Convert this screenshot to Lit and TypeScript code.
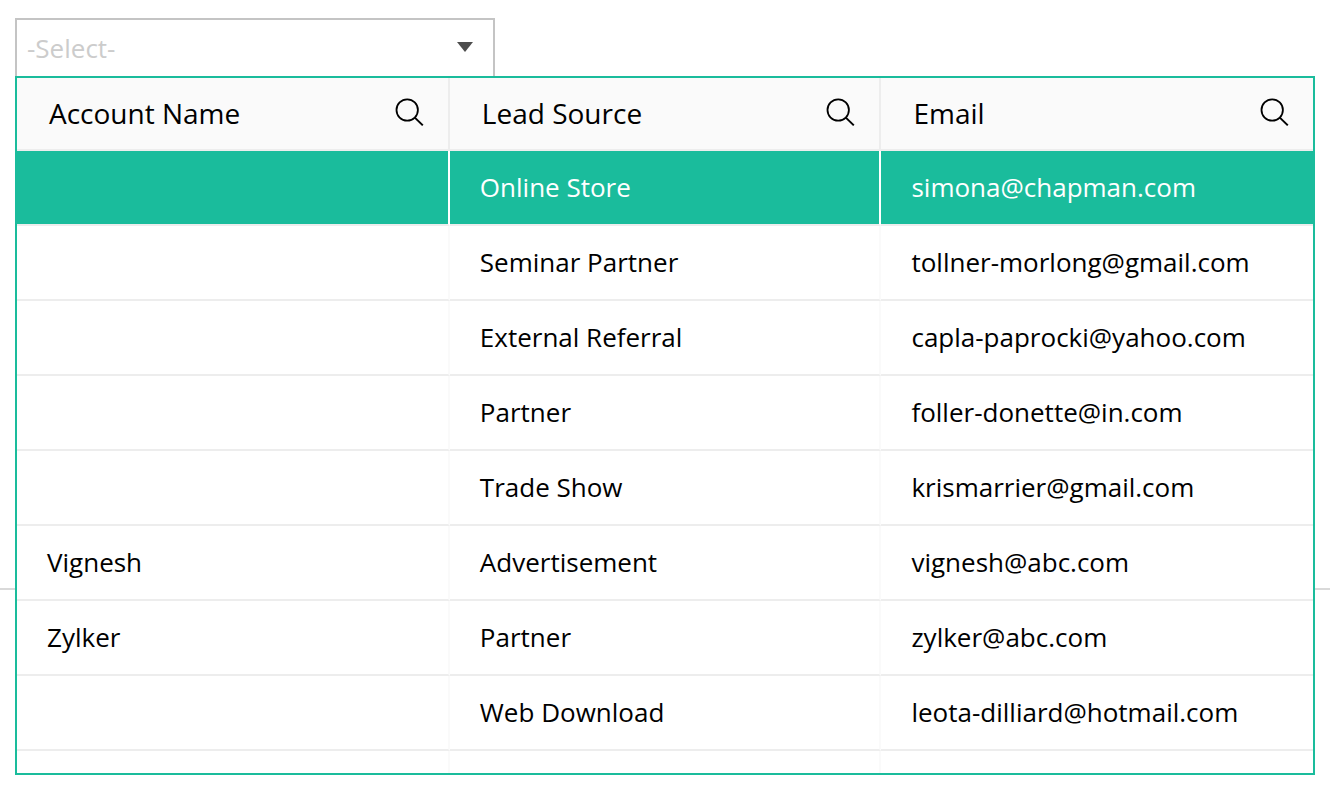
import { LitElement, html, css } from "lit";
import { customElement, state } from "lit/decorators.js";
import { classMap } from "lit/directives/class-map.js";

interface Lead {
  account: string;
  source: string;
  email: string;
}

const COLUMNS = ["Account Name", "Lead Source", "Email"];

const LEADS: Lead[] = [
  { account: "", source: "Online Store", email: "simona@chapman.com" },
  { account: "", source: "Seminar Partner", email: "tollner-morlong@gmail.com" },
  { account: "", source: "External Referral", email: "capla-paprocki@yahoo.com" },
  { account: "", source: "Partner", email: "foller-donette@in.com" },
  { account: "", source: "Trade Show", email: "krismarrier@gmail.com" },
  { account: "Vignesh", source: "Advertisement", email: "vignesh@abc.com" },
  { account: "Zylker", source: "Partner", email: "zylker@abc.com" },
  { account: "", source: "Web Download", email: "leota-dilliard@hotmail.com" },
  { account: "", source: "", email: "" },
];

@customElement("app-root")
export class AppRoot extends LitElement {
  static styles = css`
    :host {
      display: block;
      min-height: 100vh;
      background: #fff;
      color: #000;
      font-family: "Open Sans", "Noto Sans", sans-serif;
      font-size: 26px;
      line-height: 36px;
    }
    * {
      box-sizing: border-box;
    }
    .section {
      min-height: 590px;
      padding: 18px 15px 0;
      border-bottom: 2px solid #d9d9d9;
    }
    .lookup {
      position: relative;
    }
    .field {
      display: grid;
      align-items: center;
      max-width: 480px;
    }
    .picker,
    .arrow {
      grid-area: 1 / 1;
    }
    .picker {
      appearance: none;
      width: 100%;
      height: 60px;
      padding: 0 10px;
      border: 2px solid #c4c4c4;
      border-radius: 0;
      background: #fff;
      color: #ccc;
      font: inherit;
      outline: none;
    }
    .arrow {
      justify-self: end;
      width: 16px;
      height: 10px;
      margin: 0 22px 2px 0;
      pointer-events: none;
    }
    .panel {
      position: absolute;
      top: 58px;
      left: 0;
      right: 0;
      height: calc(100vh - 95px);
      overflow: auto;
      scrollbar-width: none;
      border: 2px solid #1abc9c;
      background: #fff;
    }
    .grid {
      width: 100%;
      table-layout: fixed;
      border-collapse: separate;
      border-spacing: 0;
    }
    .col-account {
      width: 33.4%;
    }
    .col-source {
      width: 33.3%;
    }
    .head {
      position: sticky;
      top: 0;
      height: 73px;
      padding: 0 24px 2px 32px;
      border-right: 2px solid #ededed;
      border-bottom: 2px solid #ededed;
      background: #fafafa;
      font-size: 28px;
      font-weight: 400;
      text-align: left;
    }
    .head-inner {
      display: flex;
      align-items: center;
      justify-content: space-between;
    }
    .search {
      display: flex;
      padding: 0;
      border: 0;
      background: none;
      color: #000;
      cursor: pointer;
    }
    .cell {
      height: 75px;
      padding: 0 30px 2px;
      border-right: 2px solid #fafafa;
      border-bottom: 2px solid #ededed;
      white-space: nowrap;
    }
    .head:last-child,
    .cell:last-child {
      border-right: 0;
    }
    .row {
      cursor: pointer;
    }
    .selected .cell {
      background: #1abc9c;
      border-right-color: #fff;
      color: #fff;
    }
  `;

  @state() private selected = 0;

  private renderHead(name: string) {
    return html`
      <th class="head" scope="col">
        <div class="head-inner">
          <span>${name}</span>
          <button class="search" type="button" aria-label="Search ${name}">
            <svg width="30" height="32" viewBox="0 0 30 32" fill="none" stroke="currentColor" stroke-width="1.8" aria-hidden="true">
              <circle cx="13.2" cy="13" r="10.7" />
              <path d="M20.8 20.6 L28.8 28.4" stroke-width="2" />
            </svg>
          </button>
        </div>
      </th>
    `;
  }

  render() {
    return html`
      <div class="section">
        <div class="lookup">
          <div class="field">
            <select class="picker" aria-label="Lead">
              <option>-Select-</option>
            </select>
            <svg class="arrow" viewBox="0 0 16 10" aria-hidden="true">
              <path d="M0 0H16L8 10Z" fill="#4d4d4d" />
            </svg>
          </div>
          <div class="panel">
            <table class="grid">
              <colgroup>
                <col class="col-account" />
                <col class="col-source" />
                <col />
              </colgroup>
              <thead>
                <tr>${COLUMNS.map((name) => this.renderHead(name))}</tr>
              </thead>
              <tbody>
                ${LEADS.map(
                  (lead, i) => html`
                    <tr
                      class=${classMap({ row: true, selected: i === this.selected })}
                      @click=${() => (this.selected = i)}
                    >
                      <td class="cell">${lead.account}</td>
                      <td class="cell">${lead.source}</td>
                      <td class="cell">${lead.email}</td>
                    </tr>
                  `
                )}
              </tbody>
            </table>
          </div>
        </div>
      </div>
    `;
  }
}
